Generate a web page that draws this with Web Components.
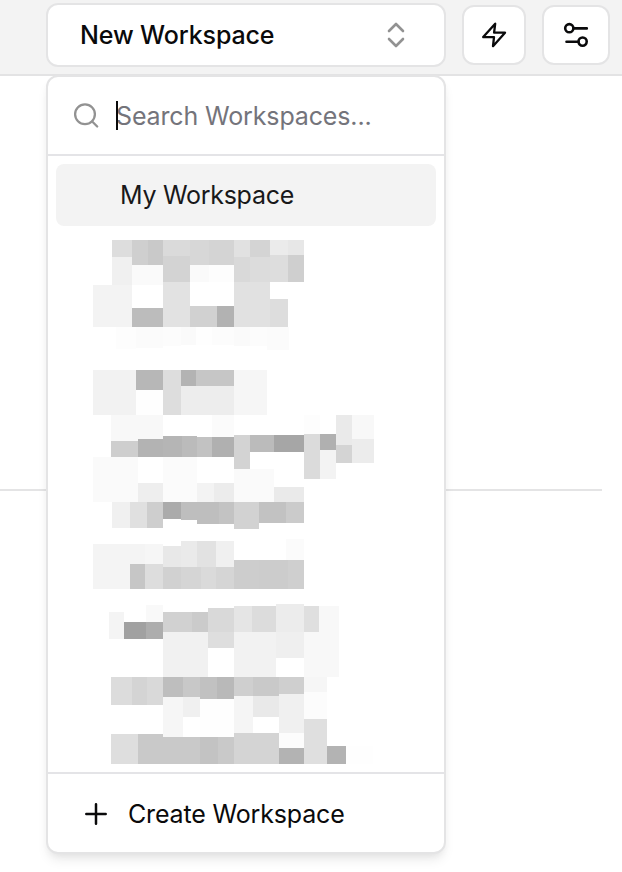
<!DOCTYPE html>
<html lang="en">
<head>
<meta charset="utf-8">
<title>Workspaces</title>
<style>
html, body { margin: 0; height: 100%; overflow: hidden; background: #fff; }
body { font-family: Inter, "Liberation Sans", sans-serif; color: #0a0a0b; font-size: 25px; --select-tracking: -0.12px; --search-tracking: -0.14px; --item-tracking: -0.28px; --create-tracking: -0.16px; }
</style>
</head>
<body>
<workspace-page></workspace-page>
<script>
function define(name, html, setup) {
  const template = document.createElement('template');
  template.innerHTML = html;
  customElements.define(name, class extends HTMLElement {
    constructor() {
      super();
      this.attachShadow({ mode: 'open' }).append(template.content.cloneNode(true));
      if (setup) setup(this.shadowRoot);
    }
  });
}

define('tool-button', `
<style>
:host { display: flex; align-items: center; justify-content: center; box-sizing: border-box; height: 60px; border: 2px solid #e4e4e5; border-radius: 12px; background: #fff; }
</style><slot></slot>`);

define('workspace-select', `
<style>
:host { display: flex; align-items: center; justify-content: space-between; box-sizing: border-box; width: 400px; height: 64px; padding: 0 34px 0 32px; border: 2px solid #e4e4e5; border-radius: 12px; background: #fff; font-weight: 500; }
.t { letter-spacing: var(--select-tracking, 0); white-space: nowrap; }
svg { display: block; }
</style>
<span class="t"><slot></slot></span>
<svg width="28" height="28" viewBox="0 0 28 28" fill="none" stroke="#929292" stroke-width="2.6" stroke-linecap="round" stroke-linejoin="round"><path d="M7 10 14 3l7 7M7 18l7 7 7-7"/></svg>`);

define('top-bar', `
<style>
:host { display: flex; align-items: flex-start; box-sizing: border-box; height: 76px; padding: 3px 12px 0 46px; gap: 16px; background: #f3f3f3; border-bottom: 2px solid #e3e3e4; }
tool-button { margin-top: 2px; }
.a { width: 64px; } .b { width: 68px; }
svg { display: block; }
</style>
<workspace-select>New Workspace</workspace-select>
<tool-button class="a"><svg width="28" height="28" viewBox="0 0 28 28" fill="none" stroke="#0a0a0b" stroke-width="2.3" stroke-linejoin="round"><path d="M15.2 2.7 3.2 16.1H14L13 25.2 25 11.7H14.1Z"/></svg></tool-button>
<tool-button class="b"><svg width="28" height="28" viewBox="0 0 28 28" fill="none" stroke="#0a0a0b" stroke-width="2.6" stroke-linecap="round"><circle cx="7.3" cy="7.2" r="4.1"/><path d="M11.7 7.4H24.8M4.5 20.7h12"/><circle cx="20.6" cy="20.6" r="4.1"/></svg></tool-button>`);

define('search-field', `
<style>
:host { display: flex; align-items: center; box-sizing: border-box; height: 79px; padding-left: 24px; border-bottom: 2px solid #e4e4e7; color: #74747b; }
svg { display: block; margin-right: 14px; }
i { width: 2px; height: 29px; background: #0a0a0b; margin-right: -2px; position: relative; }
span { letter-spacing: var(--search-tracking, 0); white-space: nowrap; }
</style>
<svg width="30" height="30" viewBox="0 0 30 30" fill="none" stroke="#929292" stroke-width="2.3" stroke-linecap="round"><circle cx="13" cy="13.3" r="9.9"/><path d="m20.2 20.5 5 5"/></svg>
<i></i><span><slot></slot></span>`);

define('menu-item', `
<style>
:host { display: flex; align-items: center; height: 62px; margin: 8px 8px 0; padding-left: 64px; border-radius: 8px; background: #f3f3f3; color: #18181a; }
span { letter-spacing: var(--item-tracking, 0); white-space: nowrap; }
</style><span><slot></slot></span>`);

define('create-action', `
<style>
:host { display: flex; align-items: center; box-sizing: border-box; height: 80px; padding: 2px 0 0 36px; border-top: 2px solid #e4e4e7; gap: 20px; }
svg { display: block; }
span { letter-spacing: var(--create-tracking, 0); white-space: nowrap; }
</style>
<svg width="24" height="24" viewBox="0 0 24 24" stroke="#0a0a0b" stroke-width="2.5" stroke-linecap="round"><path d="M2.3 12h19.4M12 2.3v19.4"/></svg>
<span><slot></slot></span>`);

/* Redacted names: left, top, right, bottom, grey level (hex). */
const tiles = `
112 240 132 257 dd|132 240 148 265 cf|148 240 163 265 c9|163 240 190 256 da|190 240 209 265 d7|209 240 234 265 d4
112 257 132 285 f0|132 265 163 285 fa|163 256 190 282 d3|190 265 209 282 fa|209 265 234 282 fd|93 285 132 327 f3
163 282 190 327 e2|132 308 163 327 bc|190 306 217 327 d1|217 306 234 327 b2
234 240 250 257 e1|250 240 270 257 d4|270 240 288 255 eb|288 240 304 255 e7|234 257 250 282 d9|250 257 270 282 dc
270 255 288 282 dd|288 255 304 282 cf|234 282 270 327 e1|270 299 288 327 dd
116 327 136 349 fd|136 327 163 348 fb|163 327 181 346 fc|181 327 196 345 fa|196 327 212 345 fe|212 327 234 345 fc|234 327 250 346 fa|250 327 267 346 fc|267 327 289 350 fb
93 370 136 415 f2|136 370 163 390 b7|136 390 163 415 fe|163 370 181 415 dd|181 370 196 386 b3|196 370 234 386 c6|181 386 234 415 ed|234 370 267 415 f6
111 415 163 441 f8|111 441 138 457 ce|138 439 163 457 b3|163 436 182 457 b5|182 436 197 457 bb|197 437 212 457 c2|212 437 234 457 b0|212 415 234 437 fb
93 457 138 502 fa|138 483 163 502 ee|163 457 197 502 fb|197 483 214 502 f3|214 483 234 502 ec
234 435 250 469 d3|250 435 274 452 bb|274 435 304 452 a6|304 415 320 434 fd|304 434 320 479 db|320 434 336 450 b0|320 450 336 479 f3
336 415 352 445 ea|336 445 352 463 d4|352 415 374 439 f8|352 439 374 463 ec|234 469 274 502 fa|274 487 304 502 ea
112 502 130 528 f0|130 502 147 528 e0|147 502 163 528 ce|163 502 181 519 ab|181 502 197 520 be|197 502 219 524 be|219 502 234 524 c3
234 502 259 529 d2|259 502 286 523 c2|286 502 304 523 cb
93 544 145 589 f4|145 544 163 564 f6|130 564 145 589 c6|145 564 163 589 dd|163 546 181 567 e8|181 541 197 567 ea|197 541 216 567 e2|216 541 234 567 f0
163 567 181 589 d1|181 567 201 589 d5|201 567 216 589 da|216 567 234 589 d5|234 560 259 589 cd|259 560 288 589 cc|288 560 304 589 cf|286 539 304 560 fb
109 612 124 639 f4|146 605 163 622 f9|124 622 146 639 a1|146 622 163 639 ad|163 612 192 632 d1|192 612 208 632 cb|208 608 234 632 d9|208 632 234 648 de|163 632 208 677 f1
111 677 132 705 dc|132 677 147 705 d4|147 677 163 705 d9|163 677 183 697 be|183 677 200 697 c8|200 677 217 699 c1|217 677 234 699 b9
163 697 183 737 f6|183 697 200 717 f0|200 699 234 737 fe|111 734 138 764 de|138 734 163 764 c9|163 737 200 764 c9|200 737 218 764 c3|218 737 234 764 c9
234 606 252 632 e5|252 606 276 632 dc|276 604 304 632 ec|304 606 319 632 df|319 606 339 677 f8|304 632 319 677 f8|234 632 276 677 f2|276 632 304 658 ef
234 677 253 696 cf|253 677 279 696 c9|279 677 304 694 cf|304 677 327 692 f6|304 692 327 719 fc|234 696 253 733 f5|253 696 279 717 e9|279 694 304 733 f0
234 733 279 764 d4|279 733 304 748 fc|279 748 304 764 b3|304 719 327 764 df|327 746 346 764 b3|346 746 373 764 fe`;

define('redacted-list', `
<style>
:host { display: block; flex: 1; min-height: 0; }
svg { display: block; }
</style>
<svg width="396" height="546" viewBox="48 226 396 546" shape-rendering="crispEdges"></svg>`, root => {
  root.querySelector('svg').innerHTML = tiles.trim().split(/[|\n]+/).map(t => {
    const [l, top, r, b, g] = t.trim().split(' ');
    return `<rect x="${l}" y="${top}" width="${r - l}" height="${b - top}" fill="#${g + g + g}"/>`;
  }).join('');
});

define('workspace-menu', `
<style>
:host { display: flex; flex-direction: column; box-sizing: border-box; width: 400px; height: 779px; border: 2px solid #e4e4e5; border-radius: 12px; background: #fff; box-shadow: 0 8px 12px -2px rgba(0,0,0,.08), 0 4px 8px -4px rgba(0,0,0,.08); overflow: hidden; }
</style>
<search-field>Search Workspaces...</search-field>
<menu-item>My Workspace</menu-item>
<redacted-list></redacted-list>
<create-action>Create Workspace</create-action>`);

define('workspace-page', `
<style>
:host { display: block; position: relative; height: 872px; overflow: hidden; }
hr { margin: 413px 20px 0 0; border: 0; height: 2px; background: #e4e4e5; }
workspace-menu { position: absolute; left: 46px; top: 75px; }
</style>
<top-bar></top-bar>
<hr>
<workspace-menu></workspace-menu>`);
</script>
</body>
</html>
